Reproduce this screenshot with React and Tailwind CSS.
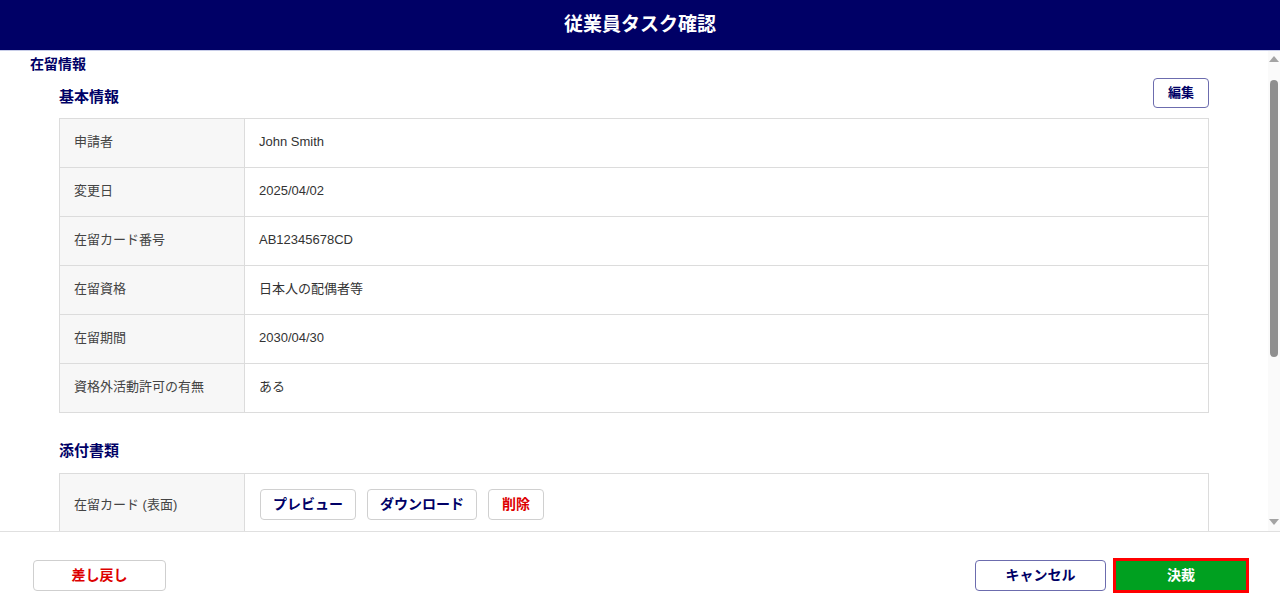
import React from 'react';

const font = { fontFamily: '"Liberation Sans", "Noto Sans CJK JP", sans-serif' };

const basicRows = [
  ['申請者', 'John Smith'],
  ['変更日', '2025/04/02'],
  ['在留カード番号', 'AB12345678CD'],
  ['在留資格', '日本人の配偶者等'],
  ['在留期間', '2030/04/30'],
  ['資格外活動許可の有無', 'ある'],
];

const attachments = ['在留カード (表面)'];

function FileButtons() {
  return (
    <div className="flex items-center gap-[11px]">
      <button className="h-[31px] rounded border border-[#d0d0d0] bg-white px-[12px] text-[14px] font-bold text-[#000066]">プレビュー</button>
      <button className="h-[31px] rounded border border-[#d0d0d0] bg-white px-[12px] text-[14px] font-bold text-[#000066]">ダウンロード</button>
      <button className="h-[31px] rounded border border-[#d0d0d0] bg-white px-[13px] text-[14px] font-bold text-[#dd0000]">削除</button>
    </div>
  );
}

function ScrollBar() {
  return (
    <div className="flex w-[12px] shrink-0 flex-col items-center bg-[#fafafa]">
      <div className="mt-[5px] h-0 w-0 border-x-[5px] border-b-[6px] border-x-transparent border-b-[#a3a3a3]" />
      <div className="mt-[18px] h-[277px] w-[8px] rounded-full bg-[#8f8f8f]" />
      <div className="flex-1" />
      <div className="mb-[6px] h-0 w-0 border-x-[5px] border-t-[6px] border-x-transparent border-t-[#a3a3a3]" />
    </div>
  );
}

export default function App() {
  return (
    <div className="flex h-screen flex-col bg-white text-[#333]" style={font}>
      <header className="flex h-[51px] shrink-0 items-center justify-center border-b border-[#c8cde8] bg-[#000066]">
        <h1 className="text-[19px] font-bold text-white">従業員タスク確認</h1>
      </header>

      <main className="flex min-h-0 flex-1">
        <div className="min-w-0 flex-1 overflow-hidden px-[30px] pt-[3px]">
          <h2 className="text-[14px] font-bold leading-[20px] text-[#000066]">在留情報</h2>

          <div className="px-[29px]">
            <div className="mt-[4px] flex h-[30px] items-end justify-between">
              <h3 className="pb-[1px] text-[15px] font-bold leading-[20px] text-[#000066]">基本情報</h3>
              <button className="h-[30px] w-[56px] rounded border border-[#6c6cae] bg-white text-[13px] font-bold text-[#000066]">編集</button>
            </div>

            <table className="mt-[10px] w-full border-collapse text-[13px]">
              <tbody>
                {basicRows.map(([label, value]) => (
                  <tr key={label} className="h-[49px]">
                    <td className="w-[185px] border border-[#dcdcdc] bg-[#f7f7f7] px-[14px] pb-[2px] text-[#444]">{label}</td>
                    <td className="border border-[#dcdcdc] px-[14px] pb-[2px] text-[#333]">{value}</td>
                  </tr>
                ))}
              </tbody>
            </table>

            <h3 className="mt-[27px] text-[15px] font-bold leading-[22px] text-[#000066]">添付書類</h3>

            <table className="mt-[11px] w-full border-collapse text-[13px]">
              <tbody>
                {attachments.map((label) => (
                  <tr key={label} className="h-[62px]">
                    <td className="w-[185px] border border-[#dcdcdc] bg-[#f7f7f7] px-[14px] text-[#444]">{label}</td>
                    <td className="border border-[#dcdcdc] px-[15px]">
                      <FileButtons />
                    </td>
                  </tr>
                ))}
              </tbody>
            </table>
          </div>
        </div>
        <ScrollBar />
      </main>

      <footer className="flex h-[84px] shrink-0 items-center justify-between border-t border-[#e0e0e0] pt-[4px] pr-[31px] pl-[33px]">
        <button className="h-[31px] w-[133px] rounded border border-[#cfcfcf] bg-white text-[14px] font-bold text-[#dd0000]">差し戻し</button>
        <div className="flex items-center gap-[7px]">
          <button className="h-[31px] w-[131px] rounded border border-[#6c6cae] bg-white text-[14px] font-bold text-[#000066]">キャンセル</button>
          <button className="h-[35px] w-[136px] border-[3px] border-[#ff0000] bg-[#00a020] text-[14px] font-bold text-white">決裁</button>
        </div>
      </footer>
    </div>
  );
}
